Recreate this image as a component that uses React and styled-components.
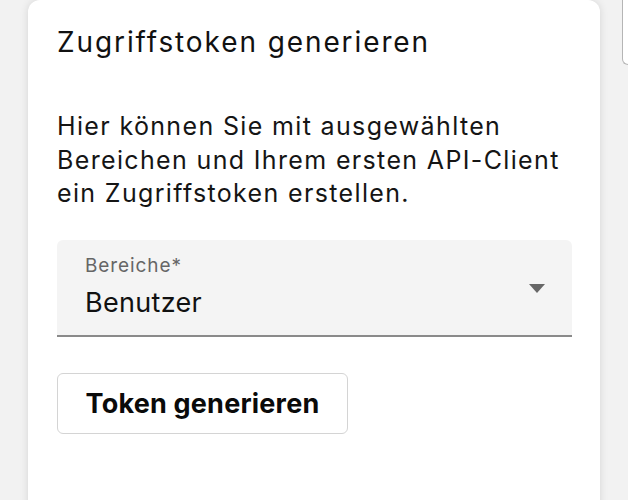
import React from "react";
import styled, { createGlobalStyle } from "styled-components";

const Global = createGlobalStyle`
  html, body { margin: 0; padding: 0; background: #f2f2f2; }
  body { font-family: Inter, "Noto Sans", sans-serif; color: #111; }
  * { box-sizing: border-box; }
`;

const Page = styled.div`
  display: flex;
  align-items: flex-start;
  height: 500px;
  overflow: hidden;
  padding-left: 28px;
  gap: 22px;
`;

const Card = styled.section`
  width: 572px;
  height: 520px;
  background: #fff;
  border-radius: 12px;
  box-shadow: 0 0 9px rgba(0, 0, 0, 0.12);
  padding: 25px 28px 0 29px;
  display: flex;
  flex-direction: column;
`;

const SidePanel = styled.div`
  flex: 1;
  height: 65px;
  background: #fff;
  border-left: 1px solid #b5b5b5;
  border-bottom: 1px solid #b5b5b5;
  border-bottom-left-radius: 7px;
`;

const Title = styled.h2`
  margin: 0;
  font-size: 28px;
  line-height: 34px;
  font-weight: 400;
  letter-spacing: 1.9px;
  color: #111;
  white-space: nowrap;
`;

const Text = styled.p`
  margin: 51px 0 0;
  font-size: 25px;
  line-height: 33.5px;
  font-weight: 400;
  letter-spacing: 1.35px;
  color: #151515;
  white-space: nowrap;
`;

const Field = styled.div`
  margin-top: 29px;
  height: 97px;
  background: #f4f4f4;
  border-radius: 6px 6px 0 0;
  border-bottom: 2px solid #8a8a8a;
  display: flex;
  align-items: flex-start;
  padding: 14px 27px 0 28px;
`;

const FieldBody = styled.div`
  flex: 1;
  display: flex;
  flex-direction: column;
  gap: 8px;
`;

const Label = styled.span`
  font-size: 19px;
  line-height: 24px;
  letter-spacing: 0.9px;
  color: #666;
`;

const Value = styled.span`
  font-size: 27px;
  line-height: 34px;
  letter-spacing: 0.3px;
  color: #111;
`;

const Arrow = styled.span`
  width: 0;
  height: 0;
  margin-top: 30px;
  border-left: 8.5px solid transparent;
  border-right: 8.5px solid transparent;
  border-top: 9px solid #676767;
`;

const Button = styled.button`
  margin-top: 36px;
  align-self: flex-start;
  width: 291px;
  height: 61px;
  background: #fff;
  border: 1px solid #d4d4d4;
  border-radius: 6px;
  font-family: Inter, "Noto Sans", sans-serif;
  font-size: 27px;
  font-weight: 700;
  letter-spacing: 0.2px;
  color: #0a0a0a;
  padding: 0;
  cursor: pointer;
`;

export default function App() {
  return (
    <>
      <Global />
      <Page>
        <Card>
          <Title>Zugriffstoken generieren</Title>
          <Text>
            Hier können Sie mit ausgewählten
            <br />
            Bereichen und Ihrem ersten API-Client
            <br />
            ein Zugriffstoken erstellen.
          </Text>
          <Field>
            <FieldBody>
              <Label>Bereiche*</Label>
              <Value>Benutzer</Value>
            </FieldBody>
            <Arrow />
          </Field>
          <Button>Token generieren</Button>
        </Card>
        <SidePanel />
      </Page>
    </>
  );
}
